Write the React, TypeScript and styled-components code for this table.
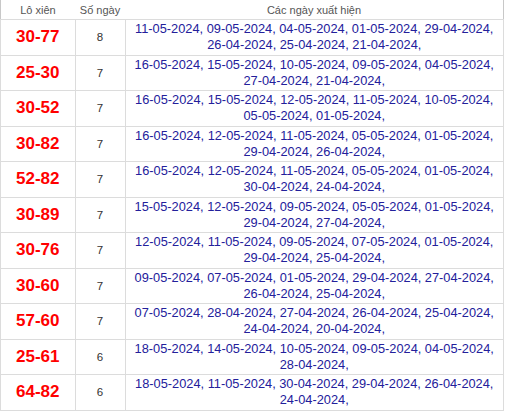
import React from "react";
import styled, { createGlobalStyle } from "styled-components";

interface Pair {
  pair: string;
  count: number;
  dates: string[];
}

const data: Pair[] = [
  { pair: "30-77", count: 8, dates: ["11-05-2024", "09-05-2024", "04-05-2024", "01-05-2024", "29-04-2024", "26-04-2024", "25-04-2024", "21-04-2024"] },
  { pair: "25-30", count: 7, dates: ["16-05-2024", "15-05-2024", "10-05-2024", "09-05-2024", "04-05-2024", "27-04-2024", "21-04-2024"] },
  { pair: "30-52", count: 7, dates: ["16-05-2024", "15-05-2024", "12-05-2024", "11-05-2024", "10-05-2024", "05-05-2024", "01-05-2024"] },
  { pair: "30-82", count: 7, dates: ["16-05-2024", "12-05-2024", "11-05-2024", "05-05-2024", "01-05-2024", "29-04-2024", "26-04-2024"] },
  { pair: "52-82", count: 7, dates: ["16-05-2024", "12-05-2024", "11-05-2024", "05-05-2024", "01-05-2024", "30-04-2024", "24-04-2024"] },
  { pair: "30-89", count: 7, dates: ["15-05-2024", "12-05-2024", "09-05-2024", "05-05-2024", "01-05-2024", "29-04-2024", "27-04-2024"] },
  { pair: "30-76", count: 7, dates: ["12-05-2024", "11-05-2024", "09-05-2024", "07-05-2024", "01-05-2024", "29-04-2024", "25-04-2024"] },
  { pair: "30-60", count: 7, dates: ["09-05-2024", "07-05-2024", "01-05-2024", "29-04-2024", "27-04-2024", "26-04-2024", "25-04-2024"] },
  { pair: "57-60", count: 7, dates: ["07-05-2024", "28-04-2024", "27-04-2024", "26-04-2024", "25-04-2024", "24-04-2024", "20-04-2024"] },
  { pair: "25-61", count: 6, dates: ["18-05-2024", "14-05-2024", "10-05-2024", "09-05-2024", "04-05-2024", "28-04-2024"] },
  { pair: "64-82", count: 6, dates: ["18-05-2024", "11-05-2024", "30-04-2024", "29-04-2024", "26-04-2024", "24-04-2024"] },
];

const GlobalStyle = createGlobalStyle`
  body {
    margin: 0;
    background: #fff;
    font-family: "Liberation Sans", Arial, sans-serif;
  }
`;

const Table = styled.table`
  width: 504px;
  border-collapse: collapse;
  table-layout: fixed;
  border-left: 1px solid #c8c8c8;
  border-right: 1px solid #c8c8c8;
  border-bottom: 1px solid #c8c8c8;
`;

const HeadCell = styled.th<{ $w?: number }>`
  width: ${(p) => (p.$w ? `${p.$w}px` : "auto")};
  height: 19px;
  padding: 0;
  font-size: 11px;
  font-weight: normal;
  color: #555;
  text-align: center;
  vertical-align: middle;
  border-bottom: 1px solid #dcdcdc;
`;

const Cell = styled.td`
  border: 1px solid #dcdcdc;
  padding: 1px 4px;
  text-align: center;
  vertical-align: middle;
`;

const PairCell = styled(Cell)`
  color: #ff0000;
  font-weight: bold;
  font-size: 17px;
`;

const CountCell = styled(Cell)`
  color: #333;
  font-size: 11.5px;
`;

const DatesCell = styled(Cell)`
  color: #23209b;
  font-size: 12.8px;
  line-height: 16px;
  padding: 1.25px 2px;
`;

export default function App() {
  return (
    <>
      <GlobalStyle />
      <Table>
        <thead>
          <tr>
            <HeadCell $w={74}>Lô xiên</HeadCell>
            <HeadCell $w={50}>Số ngày</HeadCell>
            <HeadCell>Các ngày xuất hiện</HeadCell>
          </tr>
        </thead>
        <tbody>
          {data.map((row) => (
            <tr key={row.pair}>
              <PairCell>{row.pair}</PairCell>
              <CountCell>{row.count}</CountCell>
              <DatesCell>{row.dates.map((d) => `${d}, `).join("").trimEnd()}</DatesCell>
            </tr>
          ))}
        </tbody>
      </Table>
    </>
  );
}
